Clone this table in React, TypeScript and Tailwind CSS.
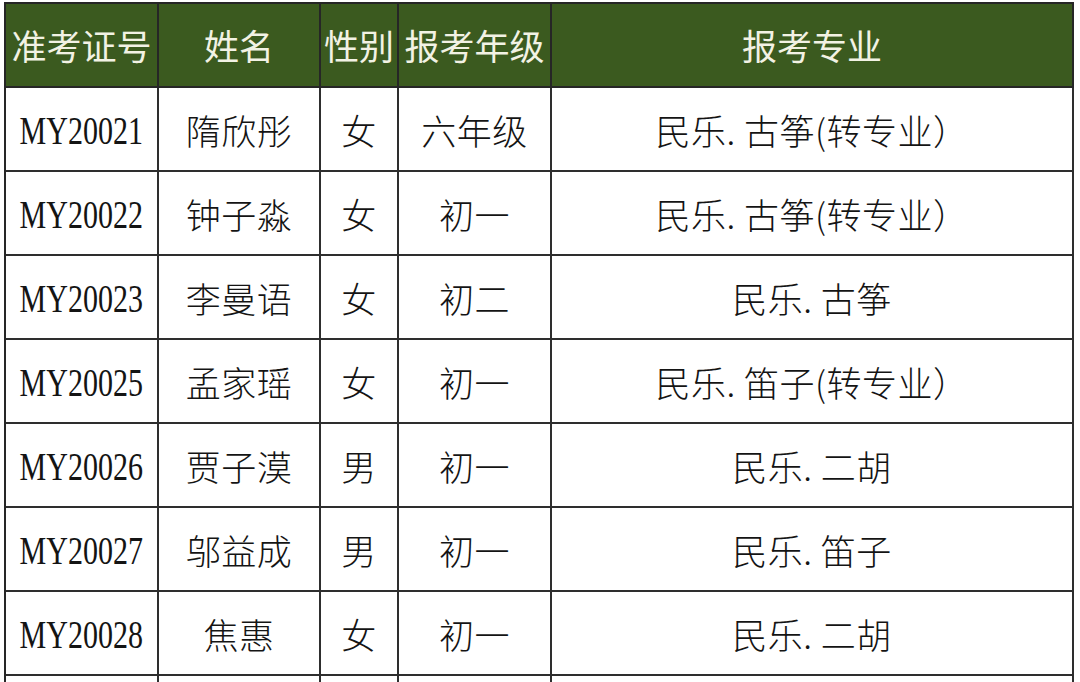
const columns = [
  { key: "id", label: "准考证号", width: "w-[153px]" },
  { key: "name", label: "姓名", width: "w-[162px]" },
  { key: "sex", label: "性别", width: "w-[78px]" },
  { key: "grade", label: "报考年级", width: "w-[153px]" },
  { key: "major", label: "报考专业", width: "w-[522px]" },
];

const rows = [
  { id: "MY20021", name: "隋欣彤", sex: "女", grade: "六年级", major: "民乐. 古筝(转专业）" },
  { id: "MY20022", name: "钟子淼", sex: "女", grade: "初一", major: "民乐. 古筝(转专业）" },
  { id: "MY20023", name: "李曼语", sex: "女", grade: "初二", major: "民乐. 古筝" },
  { id: "MY20025", name: "孟家瑶", sex: "女", grade: "初一", major: "民乐. 笛子(转专业）" },
  { id: "MY20026", name: "贾子漠", sex: "男", grade: "初一", major: "民乐. 二胡" },
  { id: "MY20027", name: "邬益成", sex: "男", grade: "初一", major: "民乐. 笛子" },
  { id: "MY20028", name: "焦惠", sex: "女", grade: "初一", major: "民乐. 二胡" },
  { id: "", name: "", sex: "", grade: "", major: "" },
];

const cjk = { fontFamily: '"Noto Sans CJK SC", "Noto Sans", sans-serif' };

export default function App() {
  return (
    <div className="w-[1080px] h-[682px] overflow-hidden bg-white pt-[2px] pl-[4px]">
      <div className="w-[1070px] border-l-2 border-t-2 border-[#262626]">
        {/* Header */}
        <div className="flex h-[84px] bg-[#3b5a1f]">
          {columns.map((col) => (
            <div
              key={col.key}
              className={`${col.width} shrink-0 flex items-center justify-center border-r-2 border-b-2 border-[#262626] text-[35px] font-normal text-[#f2f2e4] whitespace-nowrap overflow-hidden`}
              style={cjk}
            >
              {col.label}
            </div>
          ))}
        </div>

        {/* Body */}
        {rows.map((row, i) => (
          <div key={i} className="flex h-[84px]">
            {columns.map((col) => (
              <div
                key={col.key}
                className={`${col.width} shrink-0 flex items-center justify-center border-r-2 border-b-2 border-[#2e2e2e] text-[#141414] whitespace-nowrap`}
              >
                {col.key === "id" ? (
                  <span
                    className="inline-block text-[40px] leading-none scale-x-[0.75] mt-[3px]"
                    style={{ fontFamily: '"Liberation Serif", serif' }}
                  >
                    {row.id}
                  </span>
                ) : (
                  <span className="text-[35px] font-light tracking-[0.5px] mt-[2px]" style={cjk}>
                    {row[col.key as keyof typeof row]}
                  </span>
                )}
              </div>
            ))}
          </div>
        ))}
      </div>
    </div>
  );
}
